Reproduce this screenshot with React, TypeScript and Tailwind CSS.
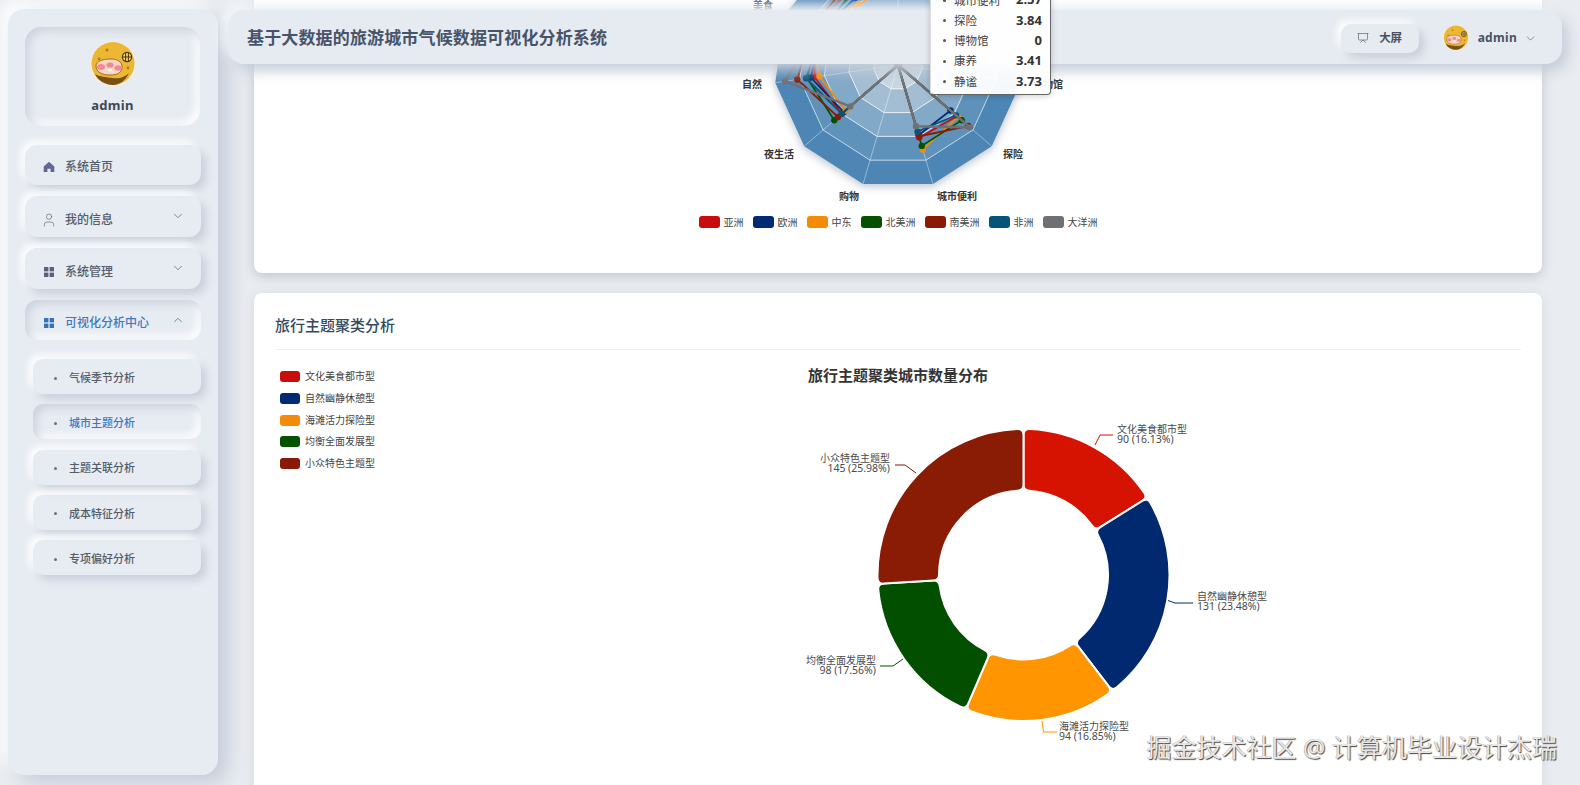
import React from "react";
import { ChevronDown, ChevronUp, Presentation, User } from "lucide-react";

const raised = "shadow-[5px_5px_9px_#c9cfda,-4px_-4px_8px_#ffffff]";
const pressed = "shadow-[inset_4px_4px_8px_#cdd3de,inset_-4px_-4px_8px_#ffffff]";

const subMenus = [
  { label: "气候季节分析" },
  { label: "城市主题分析", active: true },
  { label: "主题关联分析" },
  { label: "成本特征分析" },
  { label: "专项偏好分析" },
];

const continents = [
  { name: "亚洲", color: "#c80d0a", values: [3.3, 3.6, 3.7, 3.4, 3.0, 0, 3.05, 3.15, 0, 3.4, 3.5] },
  { name: "欧洲", color: "#002a72", values: [4.1, 3.2, 3.4, 3.55, 2.9, 0, 2.95, 2.8, 0, 3.1, 3.6] },
  { name: "中东", color: "#f58a07", values: [3.5, 2.9, 3.9, 3.2, 2.8, 0, 3.55, 3.2, 0, 3.5, 3.3] },
  { name: "北美洲", color: "#045200", values: [3.0, 3.4, 3.5, 3.7, 3.4, 0, 3.4, 3.4, 0, 3.2, 3.4] },
  { name: "南美洲", color: "#8a1a05", values: [3.4, 3.8, 3.8, 4.1, 3.2, 0, 3.0, 3.75, 0, 3.3, 3.2] },
  { name: "非洲", color: "#07547a", values: [3.1, 3.5, 3.3, 3.75, 3.0, 0, 2.8, 3.1, 0, 3.0, 3.7] },
  { name: "大洋洲", color: "#6e7074", values: [2.8, 3.7, 3.6, 4.6, 2.55, 0, 2.57, 3.84, 0, 3.41, 3.73] },
];

const radarLabels = [
  { text: "美食", x: 763, y: 9 },
  { text: "自然", x: 752, y: 88 },
  { text: "夜生活", x: 779, y: 158 },
  { text: "购物", x: 849, y: 200 },
  { text: "城市便利", x: 957, y: 200 },
  { text: "探险", x: 1013, y: 158 },
  { text: "博物馆", x: 1048, y: 88 },
];

const tooltipRows = [
  { label: "城市便利", value: "2.57" },
  { label: "探险", value: "3.84" },
  { label: "博物馆", value: "0" },
  { label: "康养", value: "3.41" },
  { label: "静谧", value: "3.73" },
];

const clusters = [
  { name: "文化美食都市型", count: 90, percent: 16.13, color: "#d61200", legend: "#c80d0a" },
  { name: "自然幽静休憩型", count: 131, percent: 23.48, color: "#00296f", legend: "#002a72" },
  { name: "海滩活力探险型", count: 94, percent: 16.85, color: "#ff9500", legend: "#f58a07" },
  { name: "均衡全面发展型", count: 98, percent: 17.56, color: "#024f00", legend: "#045200" },
  { name: "小众特色主题型", count: 145, percent: 25.98, color: "#8a1b04", legend: "#8a1a05" },
];

const pieLabels = [
  { x: 1117, y: 434, anchor: "start", line: "1095,446 1100,436 1113,436" },
  { x: 1197, y: 601, anchor: "start", line: "1168,601.5 1175,604 1193,604" },
  { x: 1059, y: 731, anchor: "start", line: "1042,722 1043.5,733 1057,733" },
  { x: 876, y: 665, anchor: "end", line: "903,660 893,667 880,667" },
  { x: 890, y: 463, anchor: "end", line: "916,474 905,466 895,466" },
];

const CX = 898;
const CY = 65;
const R = 124;

const axisPoint = (i: number, r: number) => {
  const a = Math.PI / 2 + (i * 2 * Math.PI) / 11;
  return [CX + r * Math.cos(a), CY - r * Math.sin(a)];
};

const ringPoints = (r: number) =>
  Array.from({ length: 11 }, (_, i) => axisPoint(i, r).join(",")).join(" ");

const PCX = 1023.5;
const PCY = 576;
const R1 = 146;
const R0 = 84.5;

const polar = (r: number, a: number) =>
  `${(PCX + r * Math.sin(a)).toFixed(2)} ${(PCY - r * Math.cos(a)).toFixed(2)}`;

// rounded ring sector, angles measured clockwise from the top
const sector = (a0: number, a1: number) => {
  const c = 6;
  const o = c / R1;
  const i = c / R0;
  return [
    `M ${polar(R1 - c, a0)}`,
    `Q ${polar(R1, a0)} ${polar(R1, a0 + o)}`,
    `A ${R1} ${R1} 0 ${a1 - a0 > Math.PI ? 1 : 0} 1 ${polar(R1, a1 - o)}`,
    `Q ${polar(R1, a1)} ${polar(R1 - c, a1)}`,
    `L ${polar(R0 + c, a1)}`,
    `Q ${polar(R0, a1)} ${polar(R0, a1 - i)}`,
    `A ${R0} ${R0} 0 0 0 ${polar(R0, a0 + i)}`,
    `Q ${polar(R0, a0)} ${polar(R0 + c, a0)}`,
    "Z",
  ].join(" ");
};

const Avatar = ({ size }: { size: number }) => (
  <svg width={size} height={size} viewBox="0 0 46 46">
    <circle cx="23" cy="23" r="23" fill="#f3efe6" />
    <circle cx="23" cy="22.5" r="21.5" fill="#ecb733" />
    <path d="M5 33c5 3 11 3 18 4s12-1 16-5c-3 7-9 12-16 12S8 40 5 33z" fill="#7a5016" />
    <circle cx="17" cy="9" r="1.6" fill="#b67d12" />
    <circle cx="9" cy="18" r="1.4" fill="#b67d12" />
    <circle cx="38" cy="27" r="1.4" fill="#b67d12" />
    <path d="M6 25c0-5 7-7 15-7 7 0 11 3 11 8 0 6-5 8-12 8-8 0-14-3-14-9z" fill="#fbd6c6" stroke="#8a5a18" strokeWidth="0.8" />
    <ellipse cx="11" cy="26" rx="4" ry="3" fill="#f28b8f" />
    <ellipse cx="28" cy="27" rx="3.6" ry="2.8" fill="#f28b8f" />
    <ellipse cx="20" cy="24" rx="3.6" ry="2.6" fill="#e98a90" />
    <rect x="18" y="28" width="4" height="2.2" fill="#ffffff" />
    <circle cx="37" cy="16" r="4.6" fill="#f6d56a" stroke="#4c3208" strokeWidth="1.2" />
    <path d="M35.6 11.8v8.4M38.4 11.8v8.4M33 16h8" stroke="#4c3208" strokeWidth="1" />
  </svg>
);

const HomeIcon = () => (
  <svg width="12" height="12" viewBox="0 0 12 12" fill="#62688f">
    <path d="M6 .8 11.3 5.4V11H7.6V7.8H4.4V11H.7V5.4z" />
  </svg>
);

const GridIcon = ({ color }: { color: string }) => (
  <svg width="12" height="12" viewBox="0 0 12 12" fill={color}>
    <rect x="1" y="1" width="4.4" height="4.4" />
    <rect x="6.6" y="1" width="4.4" height="4.4" />
    <rect x="1" y="6.6" width="4.4" height="4.4" />
    <rect x="6.6" y="6.6" width="4.4" height="4.4" />
  </svg>
);

const Sidebar = () => (
  <aside className="relative z-[1] ml-2 mt-[9px] flex h-[766px] w-[210px] shrink-0 flex-col rounded-2xl bg-[#e7ebf2] px-[17px] pt-[18px] shadow-[10px_8px_20px_#c5ccd8,-8px_-8px_16px_#ffffff]">
    <div className={`flex h-[99px] w-[175px] flex-col items-center rounded-2xl pt-[14px] ${pressed}`}>
      <Avatar size={46} />
      <span className="mt-2 text-[13px] leading-5 font-bold tracking-[0.3px] text-[#3f4756]">admin</span>
    </div>

    <div className={`mt-[19px] flex h-10 items-center rounded-xl pt-[3px] pl-[18px] ${raised}`}>
      <HomeIcon />
      <span className="ml-[10px] text-xs font-medium text-[#555c69]">系统首页</span>
    </div>
    <div className={`mt-[11px] flex h-[41px] items-center rounded-xl pt-[6px] pl-[16px] ${raised}`}>
      <User size={16} strokeWidth={1.1} className="text-[#6b7280]" />
      <span className="ml-2 flex-1 text-xs font-medium text-[#555c69]">我的信息</span>
      <ChevronDown size={14} strokeWidth={1.2} className="mr-4 mb-[7px] text-[#555c69]" />
    </div>
    <div className={`mt-[11px] flex h-[41px] items-center rounded-xl pt-[6px] pl-[18px] ${raised}`}>
      <GridIcon color="#5c6275" />
      <span className="ml-[10px] flex-1 text-xs font-medium text-[#555c69]">系统管理</span>
      <ChevronDown size={14} strokeWidth={1.2} className="mr-4 mb-[7px] text-[#555c69]" />
    </div>
    <div className={`mt-[11px] flex h-10 items-center rounded-xl pt-[6px] pl-[18px] ${pressed}`}>
      <GridIcon color="#2f74bd" />
      <span className="ml-[10px] flex-1 text-xs font-medium text-[#3a78bf]">可视化分析中心</span>
      <ChevronUp size={14} strokeWidth={1.2} className="mr-4 mb-[7px] text-[#555c69]" />
    </div>

    <div className="mt-[19px] ml-2 flex flex-col gap-[10.25px]">
      {subMenus.map((item) => (
        <div
          key={item.label}
          className={`flex h-[35px] items-center rounded-[10px] pt-[3px] pl-[21px] ${item.active ? pressed : raised}`}
        >
          <span className="h-[3px] w-[3px] rounded-full bg-[#6b7280]" />
          <span
            className={`ml-[12px] text-[11px] font-medium ${item.active ? "text-[#3a78bf]" : "text-[#555c69]"}`}
          >
            {item.label}
          </span>
        </div>
      ))}
    </div>
  </aside>
);

const Header = () => (
  <header className="absolute top-[10px] left-[10px] z-10 flex h-[54px] w-[1334px] items-center rounded-2xl bg-[#e6eaf1] pt-[2px] pr-[25px] pl-[19px] shadow-[6px_7px_14px_#c5ccd8,-6px_-6px_12px_#f4f6fa]">
    <h1 className="flex-1 text-[17px] font-bold tracking-[0.15px] text-[#46546a]">基于大数据的旅游城市气候数据可视化分析系统</h1>
    <div className={`flex h-[29px] w-[78px] items-center justify-center gap-[10px] rounded-[10px] ${raised}`}>
      <Presentation size={12} strokeWidth={1.4} className="text-[#5f6775]" />
      <span className="text-[11.5px] font-bold text-[#46505f]">大屏</span>
    </div>
    <div className="ml-6">
      <Avatar size={26} />
    </div>
    <span className="ml-[9px] text-xs font-bold tracking-[0.3px] text-[#4a5262]">admin</span>
    <ChevronDown size={13} strokeWidth={1.2} className="ml-[7px] text-[#555c69]" />
  </header>
);

const RadarCard = () => (
  <section className="relative h-[273px] w-[1288px] rounded-b-lg bg-white shadow-[0_3px_12px_rgba(70,75,85,0.24)]">
    <svg width="1288" height="214" viewBox="254 0 1288 214" className="block">
      <polygon points={ringPoints(R)} fill="#4d86b5" className="[filter:drop-shadow(0_2px_5px_rgba(40,70,100,0.35))]" />
      <polygon points={ringPoints(R * 0.8)} fill="#5f92bb" stroke="#ffffff" strokeOpacity="0.65" />
      <polygon points={ringPoints(R * 0.6)} fill="#83a9c8" stroke="#ffffff" strokeOpacity="0.75" />
      <polygon points={ringPoints(R * 0.4)} fill="#a3bed3" stroke="#ffffff" strokeOpacity="0.8" />
      <polygon points={ringPoints(R * 0.2)} fill="#c6d6e2" stroke="#ffffff" strokeOpacity="0.8" />
      {Array.from({ length: 11 }, (_, i) => {
        const [x, y] = axisPoint(i, R);
        return <line key={i} x1={CX} y1={CY} x2={x} y2={y} stroke="#ffffff" strokeOpacity="0.4" />;
      })}
      {continents.map((c) => {
        const pts = c.values.map((v, i) => axisPoint(i, (v / 5) * R));
        return (
          <g key={c.name}>
            <polygon
              points={pts.map((p) => p.join(",")).join(" ")}
              fill="none"
              stroke={c.color}
              strokeWidth={c.name === "大洋洲" ? 2.5 : 1.8}
            />
            {pts.map((p, i) => (
              <circle key={i} cx={p[0]} cy={p[1]} r="3.2" fill={c.color} />
            ))}
          </g>
        );
      })}
      {radarLabels.map((l) => (
        <text key={l.text} x={l.x} y={l.y} textAnchor="middle" fontSize="10" fontWeight="700" fill="#333333">
          {l.text}
        </text>
      ))}
    </svg>

    <div className="mt-[2px] flex h-3 items-center justify-center gap-[9px]">
      {continents.map((c) => (
        <div key={c.name} className="flex items-center gap-1">
          <span className="h-3 w-[21px] rounded-[3px]" style={{ backgroundColor: c.color }} />
          <span className="text-[10px] text-[#444444]">{c.name}</span>
        </div>
      ))}
    </div>

    <div className="absolute top-[-10px] left-[676px] z-20 h-[105px] w-[121px] rounded-[4px] border-r border-b border-l border-r-[#666666] border-b-[#666666] border-l-[#dddddd] bg-white/95 pr-2 pl-[12px] shadow-[0_1px_6px_rgba(0,0,0,0.2)]">
      {tooltipRows.map((row) => (
        <div key={row.label} className="flex h-[20.3px] items-center">
          <span className="h-[3px] w-[3px] rounded-full bg-[#555555]" />
          <span className="ml-2 flex-1 text-[11.5px] text-[#444444]">{row.label}</span>
          <span className="text-[13px] font-bold text-[#333333]">{row.value}</span>
        </div>
      ))}
    </div>
  </section>
);

const ClusterCard = () => {
  let start = 0;
  const slices = clusters.map((c, i) => {
    const a0 = start;
    const a1 = start + (c.percent / 100) * Math.PI * 2;
    start = a1;
    return { ...c, a0, a1, label: pieLabels[i] };
  });

  return (
    <section className="mt-5 h-[500px] w-[1288px] rounded-t-lg bg-white px-[21px] shadow-[0_2px_12px_rgba(70,75,85,0.12)]">
      <div className="flex h-[57px] items-center border-b border-[#eeeeee] pt-2">
        <h2 className="text-[15px] font-medium text-[#34495e]">旅行主题聚类分析</h2>
      </div>
      <div className="flex">
        <div className="mt-4 ml-[5px] flex w-[120px] shrink-0 flex-col">
          {clusters.map((c) => (
            <div key={c.name} className="flex h-[21.7px] items-center gap-[5px]">
              <span className="h-[11px] w-5 rounded-[3px]" style={{ backgroundColor: c.legend }} />
              <span className="text-[10px] text-[#444444]">{c.name}</span>
            </div>
          ))}
        </div>
        <svg width="1120" height="435" viewBox="400 351 1120 435" className="block shrink-0">
          <text x="898" y="382" textAnchor="middle" fontSize="15" fontWeight="700" fill="#333333">
            旅行主题聚类城市数量分布
          </text>
          {slices.map((s) => (
            <g key={s.name}>
              <path d={sector(s.a0, s.a1)} fill={s.color} stroke="#ffffff" strokeWidth="2" />
              <polyline points={s.label.line} fill="none" stroke={s.color} strokeWidth="1" />
              <text
                x={s.label.x}
                y={s.label.y}
                textAnchor={s.label.anchor as "start" | "end"}
                fontSize="10"
                fill="#4a4a4a"
              >
                {s.name}
              </text>
              <text
                x={s.label.x}
                y={s.label.y + 10}
                textAnchor={s.label.anchor as "start" | "end"}
                fontSize="10.5"
                fill="#4a4a4a"
              >
                {`${s.count} (${s.percent.toFixed(2)}%)`}
              </text>
            </g>
          ))}
        </svg>
      </div>
    </section>
  );
};

export default function App() {
  return (
    <div className="relative flex h-[785px] w-[1580px] overflow-hidden bg-[#e9ecf1] font-['Noto_Sans','Noto_Sans_CJK_SC',sans-serif]">
      <Sidebar />
      <main className="relative flex-1">
        <Header />
        <div className="pl-9">
          <RadarCard />
          <ClusterCard />
        </div>
      </main>
      <div className="pointer-events-none absolute right-[23px] bottom-[23px] z-30 text-[25px] leading-[30px] text-[#e8e8e8] [text-shadow:1px_1px_1px_#444444,-0.5px_-0.5px_0.5px_#aaaaaa]">
        掘金技术社区 @ 计算机毕业设计杰瑞
      </div>
    </div>
  );
}
